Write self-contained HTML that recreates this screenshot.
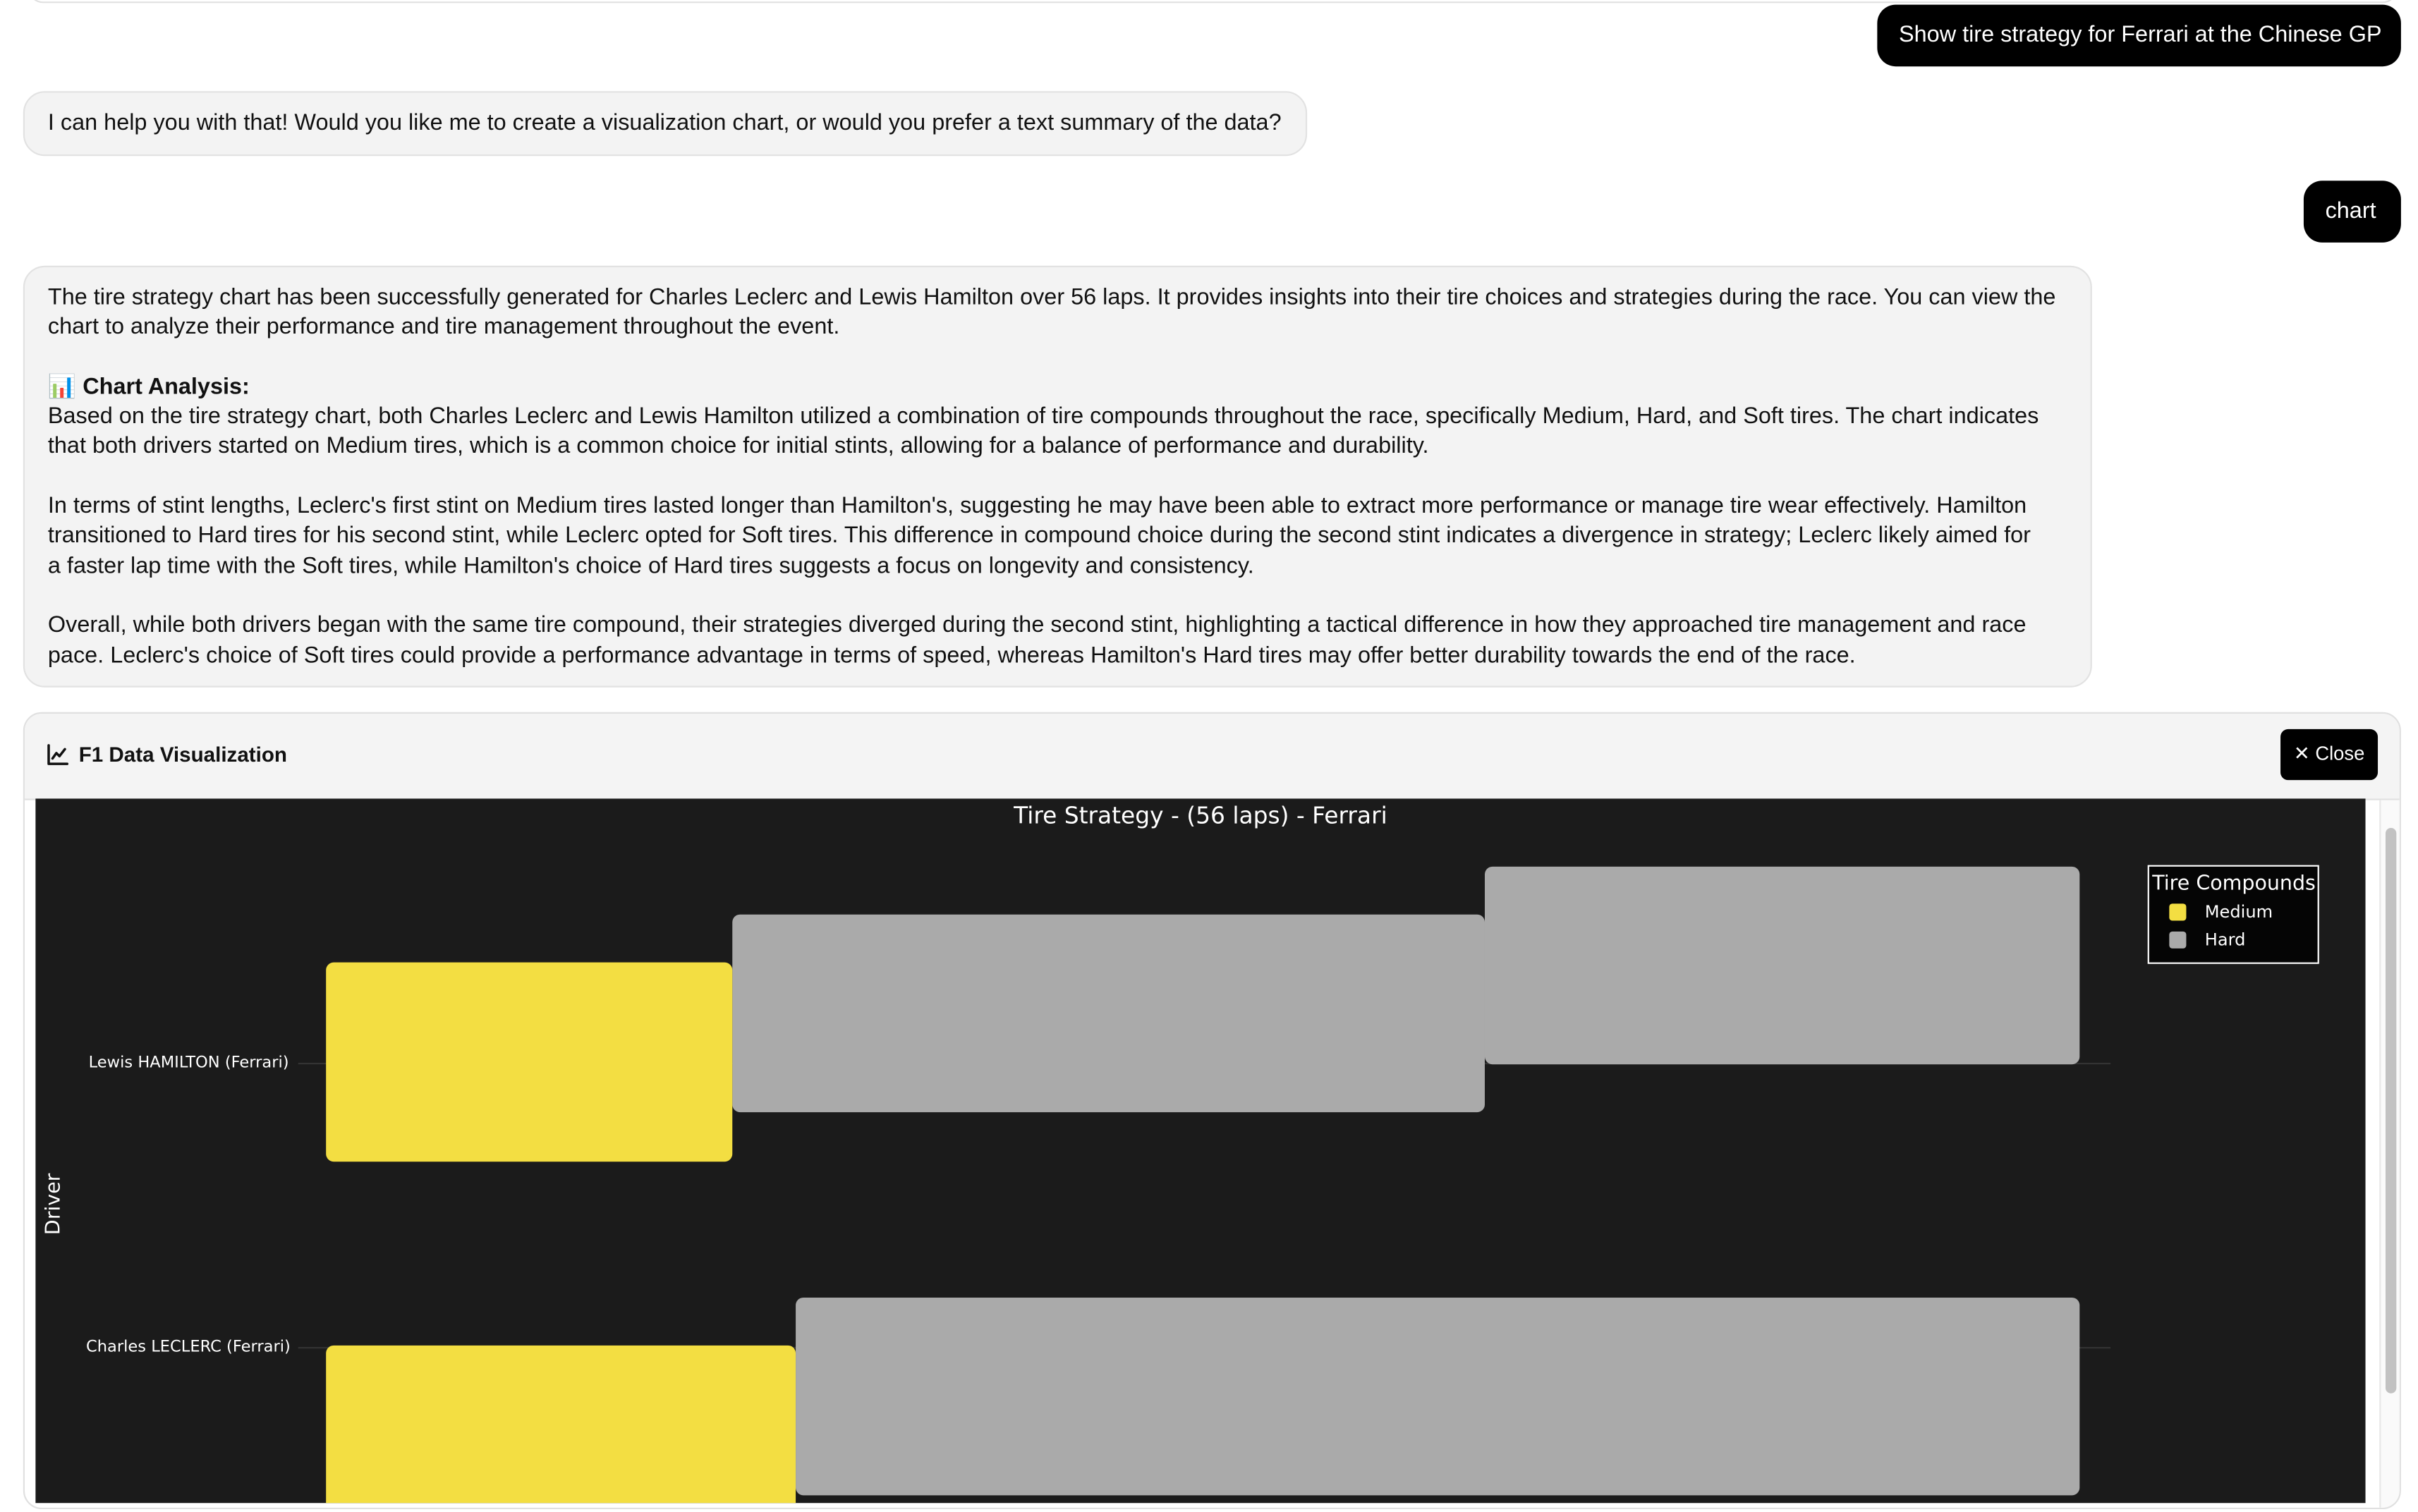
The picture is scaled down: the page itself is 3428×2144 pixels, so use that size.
<!DOCTYPE html>
<html><head><meta charset="utf-8">
<style>
html,body{margin:0;padding:0;background:#fff;overflow:hidden;}
body{width:3428px;height:2144px;}
#w{position:absolute;left:0;top:0;width:1565px;height:979px;transform:scale(2.190415);transform-origin:0 0;font-family:"Liberation Sans",Arial,sans-serif;color:#111;}
.abs{position:absolute;}
.ub{position:absolute;background:#000;color:#fff;border-radius:12px;font-size:14.8px;line-height:40px;padding:0 14px;white-space:nowrap;}
.ab{position:absolute;background:#f3f3f3;border:1px solid #e2e2e2;border-radius:14px;font-size:14.8px;white-space:nowrap;box-sizing:border-box;}
.g{position:absolute;top:560px;bottom:0;width:1px;background:#3d3d3d;}
.bar{position:absolute;border-radius:5px;}
.y{background:#f3de42;}
.h{background:#aaaaaa;}
</style></head><body><div id="w">
<div class="abs" style="left:18px;top:-10px;width:1532px;height:11px;border:1px solid #e0e0e0;border-top:none;border-radius:0 0 10px 10px;"></div>

<div class="ub" style="left:1215px;top:3px;width:311px;">Show tire strategy for Ferrari at the Chinese GP</div>

<div class="ab" style="left:15px;top:59px;width:831px;height:42px;line-height:40px;padding-left:15px;">I can help you with that! Would you like me to create a visualization chart, or would you prefer a text summary of the data?</div>

<div class="ub" style="left:1491px;top:117px;width:35px;">chart</div>

<div class="ab" style="left:15px;top:172px;width:1339px;height:273px;padding:11px 0 0 15px;line-height:19.3px;">
The tire strategy chart has been successfully generated for Charles Leclerc and Lewis Hamilton over 56 laps. It provides insights into their tire choices and strategies during the race. You can view the<br>
chart to analyze their performance and tire management throughout the event.<br><br>
<b>📊 Chart Analysis:</b><br>
Based on the tire strategy chart, both Charles Leclerc and Lewis Hamilton utilized a combination of tire compounds throughout the race, specifically Medium, Hard, and Soft tires. The chart indicates<br>
that both drivers started on Medium tires, which is a common choice for initial stints, allowing for a balance of performance and durability.<br><br>
In terms of stint lengths, Leclerc's first stint on Medium tires lasted longer than Hamilton's, suggesting he may have been able to extract more performance or manage tire wear effectively. Hamilton<br>
transitioned to Hard tires for his second stint, while Leclerc opted for Soft tires. This difference in compound choice during the second stint indicates a divergence in strategy; Leclerc likely aimed for<br>
a faster lap time with the Soft tires, while Hamilton's choice of Hard tires suggests a focus on longevity and consistency.<br><br>
Overall, while both drivers began with the same tire compound, their strategies diverged during the second stint, highlighting a tactical difference in how they approached tire management and race<br>
pace. Leclerc's choice of Soft tires could provide a performance advantage in terms of speed, whereas Hamilton's Hard tires may offer better durability towards the end of the race.
</div>

<!-- viz card -->
<div class="abs" style="left:15px;top:461px;width:1539px;height:516px;border:1px solid #e0e0e0;border-radius:12px;box-sizing:border-box;background:#fff;overflow:hidden;">
 <div class="abs" style="left:0;top:0;right:0;height:55px;background:#f4f4f4;border-bottom:1px solid #e0e0e0;"></div>
 <svg class="abs" style="left:14px;top:19px" width="15" height="15" viewBox="0 0 15 15" fill="none" stroke="#111" stroke-width="1.6" stroke-linecap="round" stroke-linejoin="round"><path d="M1.5 1.5V13.5H13.5"/><path d="M4 10L6.5 6.5L8.5 8.5L12 4"/></svg>
 <div class="abs" style="left:35px;top:18px;font-size:13.5px;font-weight:bold;line-height:18px;">F1 Data Visualization</div>
 <div class="abs" style="left:1460px;top:10px;width:63px;height:33px;background:#000;border-radius:5px;color:#fff;font-size:12.5px;line-height:33px;text-align:center;">✕ Close</div>
 <div class="abs" style="left:1524px;top:56px;width:14px;bottom:0;background:#fafafa;border-left:1px solid #e8e8e8;"></div>
 <div class="abs" style="left:1528px;top:74px;width:7px;height:366px;background:#c2c2c2;border-radius:4px;"></div>
</div>

<!-- chart -->
<div class="abs" style="left:23px;top:517px;width:1508px;height:456px;background:#1b1b1b;overflow:hidden;">
 <div class="abs" style="left:0;top:0;width:1508px;text-align:center;font-size:15px;color:#fff;line-height:22px;font-family:'DejaVu Sans',sans-serif;">Tire Strategy - (56 laps) - Ferrari</div>
 <div class="g" style="left:187px;background:#777;"></div>
 <div class="g" style="left:289px;"></div>
 <div class="g" style="left:390px;"></div>
 <div class="g" style="left:492px;"></div>
 <div class="g" style="left:593px;"></div>
 <div class="g" style="left:695px;"></div>
 <div class="g" style="left:796px;"></div>
 <div class="g" style="left:897px;"></div>
 <div class="g" style="left:999px;"></div>
 <div class="g" style="left:1100px;"></div>
 <div class="g" style="left:1202px;"></div>
 <div class="g" style="left:1303px;"></div>
 <div class="abs" style="left:170px;top:171px;width:1173px;height:1px;background:#333;"></div>
 <div class="abs" style="left:170px;top:355px;width:1173px;height:1px;background:#333;"></div>
 <div class="bar h" style="left:938px;top:44px;width:385px;height:128px;"></div>
 <div class="bar h" style="left:451px;top:75px;width:487px;height:128px;"></div>
 <div class="bar y" style="left:188px;top:106px;width:263px;height:129px;"></div>
 <div class="bar h" style="left:492px;top:323px;width:831px;height:128px;"></div>
 <div class="bar y" style="left:188px;top:354px;width:304px;height:129px;"></div>
 <div class="abs" style="left:0;top:164px;width:164px;text-align:right;color:#fff;font-size:10.3px;font-family:'DejaVu Sans',sans-serif;line-height:14px;">Lewis HAMILTON (Ferrari)</div>
 <div class="abs" style="left:0;top:348px;width:165px;text-align:right;color:#fff;font-size:10.3px;font-family:'DejaVu Sans',sans-serif;line-height:14px;">Charles LECLERC (Ferrari)</div>
 <div class="abs" style="left:-8px;top:255px;width:40px;text-align:center;color:#fff;font-size:13px;font-family:'DejaVu Sans',sans-serif;transform:rotate(-90deg);">Driver</div>
 <div class="abs" style="left:1367px;top:43px;width:109px;height:62px;background:#050505;border:1px solid #fff;color:#fff;font-family:'DejaVu Sans',sans-serif;">
  <div class="abs" style="left:2px;top:4px;font-size:13px;line-height:16px;white-space:nowrap;">Tire Compounds</div>
  <div class="abs" style="left:13px;top:24px;width:11px;height:11px;border-radius:2px;background:#f3de42;"></div>
  <div class="abs" style="left:36px;top:23px;font-size:11px;line-height:14px;">Medium</div>
  <div class="abs" style="left:13px;top:42px;width:11px;height:11px;border-radius:2px;background:#aaa;"></div>
  <div class="abs" style="left:36px;top:41px;font-size:11px;line-height:14px;">Hard</div>
 </div>
</div>
</div></body></html>
